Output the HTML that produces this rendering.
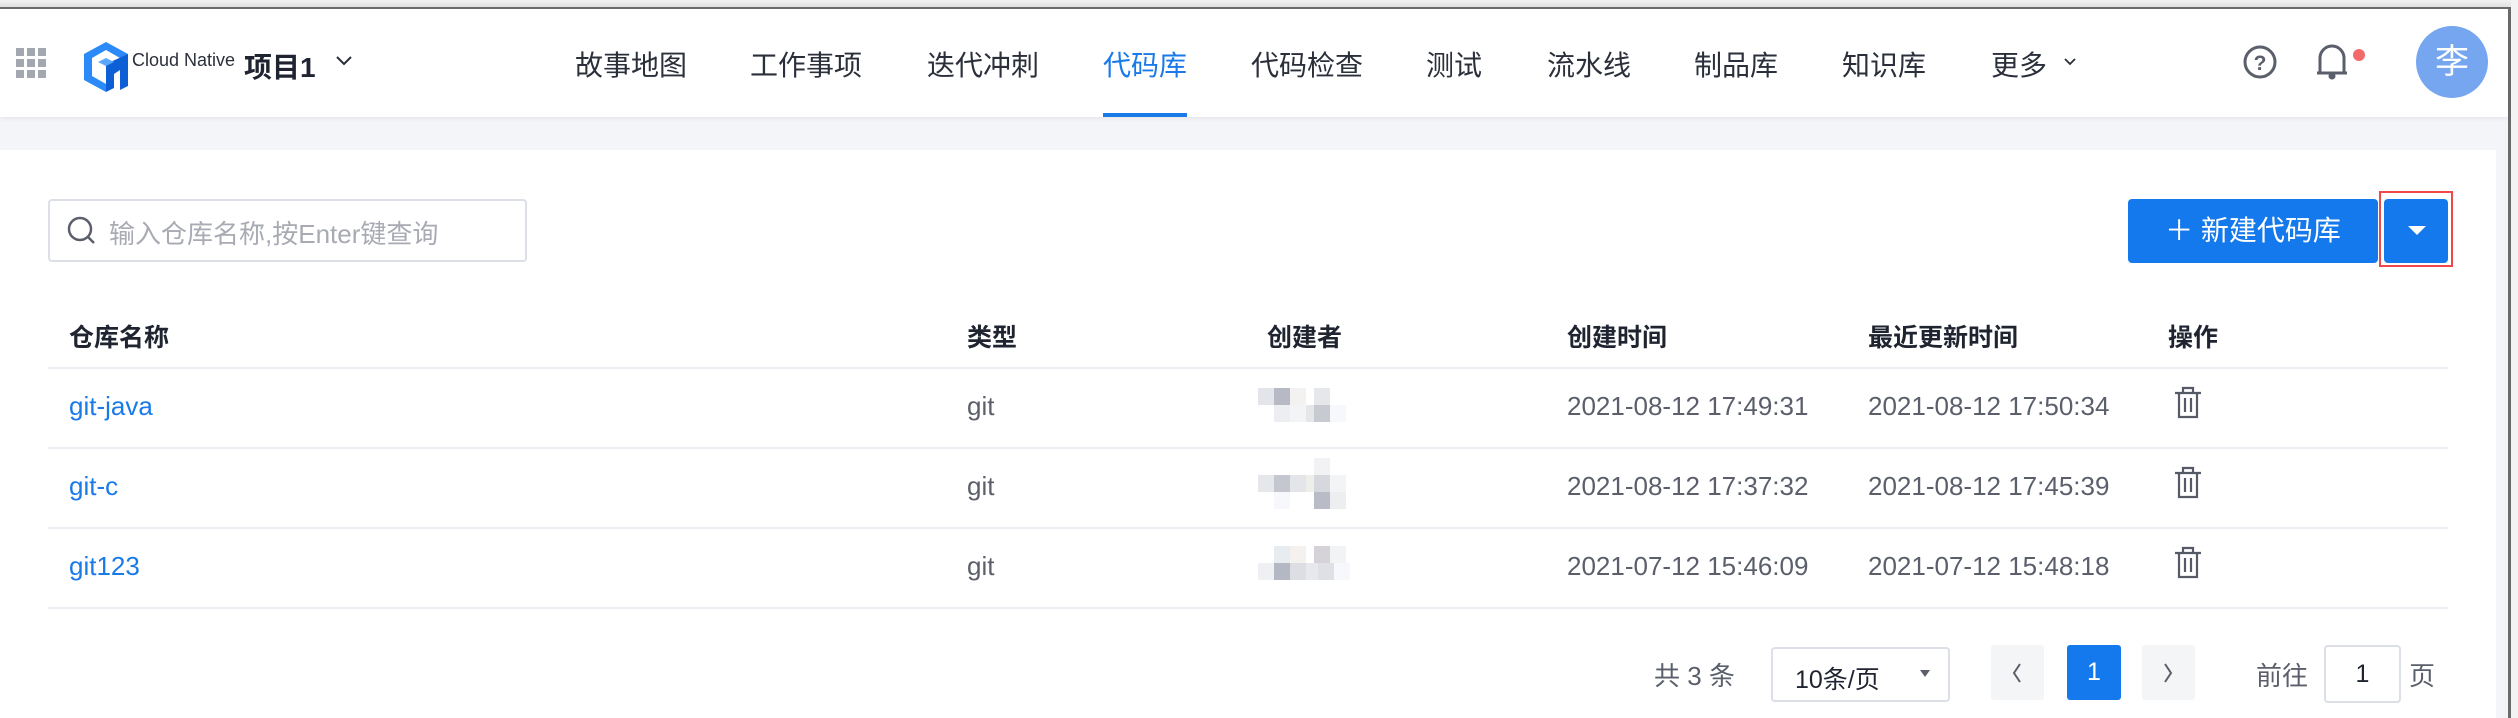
<!DOCTYPE html>
<html><head><meta charset="utf-8"><style>
*{margin:0;padding:0;box-sizing:border-box}
body{width:2518px;height:718px;position:relative;overflow:hidden;background:#f4f5f9;font-family:"Liberation Sans","Noto Sans CJK SC",sans-serif;color:#555a66}
.a{position:absolute;white-space:nowrap}
.hdr{position:absolute;left:0;top:9px;width:2508px;height:108px;background:#fff;box-shadow:0 2px 4px rgba(0,0,0,.06)}
.nav{top:44px;font-size:28px;color:#2a2f3a}
.card{position:absolute;left:0;top:150px;width:2496px;height:568px;background:#fff}
.th{top:318px;font-size:25px;font-weight:bold;color:#1f2430}
.line{position:absolute;left:48px;width:2400px;height:2px;background:#ebeef3}
.td{font-size:26px;color:#5a5f6b}
.lnk{color:#1a7ae8}
.blur{position:absolute;width:100px;height:40px}
.blur i{position:absolute;width:16px;height:17px;display:block}
</style></head><body>
<div class="a" style="left:0;top:0;width:2518px;height:8px;background:linear-gradient(#f2f2f2,#ddd)"></div>
<div class="a" style="left:0;top:7px;width:2511px;height:3px;background:#6b6b6b"></div>
<div class="a" style="left:2508px;top:7px;width:3px;height:711px;background:#6b6b6b"></div>
<div class="a" style="left:2511px;top:0;width:7px;height:718px;background:#f3f3f3"></div>
<div class="hdr"></div>
<svg class="a" style="left:16px;top:48px" width="32" height="32"><g fill="#a3a7b0"><rect x="0" y="0" width="8" height="8"/><rect x="11" y="0" width="8" height="8"/><rect x="22" y="0" width="8" height="8"/><rect x="0" y="11" width="8" height="8"/><rect x="11" y="11" width="8" height="8"/><rect x="22" y="11" width="8" height="8"/><rect x="0" y="22" width="8" height="8"/><rect x="11" y="22" width="8" height="8"/><rect x="22" y="22" width="8" height="8"/></g></svg>
<svg class="a" style="left:84px;top:42px" width="46" height="50" viewBox="0 0 46 50"><path d="M22 0 L44 12 L44 18 L36 23 L36 16 L22 8 L8 16 L8 34 L22 42 L22 50 L0 38 L0 12 Z" fill="#2b8af7"/><path d="M22 22 L44 12 L44 44 L36 48 L36 28 L30 32 L30 46 L22 50 Z" fill="#0d5fd6"/><path d="M14 20 L22 16 L30 20 L22 24 Z" fill="#5aa7ff"/></svg>
<div class="a" style="left:132px;top:50px;font-size:18px;color:#2a2f3a">Cloud Native</div>
<div class="a" style="left:244px;top:46px;font-size:28px;font-weight:bold;color:#1f2430">项目1</div>
<svg class="a" style="left:336px;top:56px" width="16" height="10"><path d="M1 1 L8 8 L15 1" stroke="#2a2f3a" stroke-width="2" fill="none"/></svg>
<div class="a nav" style="left:575px">故事地图</div>
<div class="a nav" style="left:750px">工作事项</div>
<div class="a nav" style="left:927px">迭代冲刺</div>
<div class="a nav" style="left:1103px;color:#1a7ae8">代码库</div>
<div class="a" style="left:1103px;top:113px;width:84px;height:4px;background:#1a7ae8"></div>
<div class="a nav" style="left:1251px">代码检查</div>
<div class="a nav" style="left:1426px">测试</div>
<div class="a nav" style="left:1547px">流水线</div>
<div class="a nav" style="left:1694px">制品库</div>
<div class="a nav" style="left:1842px">知识库</div>
<div class="a nav" style="left:1991px">更多</div>
<svg class="a" style="left:2064px;top:58px" width="12" height="8"><path d="M1 1 L6 6 L11 1" stroke="#2a2f3a" stroke-width="1.8" fill="none"/></svg>
<svg class="a" style="left:2243px;top:45px" width="34" height="34"><circle cx="17" cy="17" r="15" stroke="#5a5f6b" stroke-width="3" fill="none"/><text x="17" y="25" font-size="21" font-weight="bold" text-anchor="middle" fill="#5a5f6b" font-family="Liberation Sans">?</text></svg>
<svg class="a" style="left:2314px;top:40px" width="52" height="40"><path d="M3 33 L33 33 M6 33 L6 18 A12 12 0 0 1 30 18 L30 33" stroke="#5a5f6b" stroke-width="3" fill="none"/><circle cx="18" cy="36" r="3.5" fill="#5a5f6b"/><circle cx="45" cy="15" r="6" fill="#f26b6b"/></svg>
<div class="a" style="left:2416px;top:26px;width:72px;height:72px;border-radius:50%;background:#76a6ef;color:#fff;font-size:34px;text-align:center;line-height:72px">李</div>
<div class="card"></div>
<div class="a" style="left:48px;top:199px;width:479px;height:63px;border:2px solid #dcdfe6;border-radius:4px"></div>
<svg class="a" style="left:67px;top:216px" width="30" height="30"><circle cx="13" cy="13" r="11" stroke="#5a5f6b" stroke-width="2.5" fill="none"/><path d="M21 21 L27 27" stroke="#5a5f6b" stroke-width="2.5"/></svg>
<div class="a" style="left:109px;top:214px;font-size:26px;color:#a8abb3">输入仓库名称,按Enter键查询</div>
<div class="a" style="left:2128px;top:199px;width:250px;height:64px;background:#1379ec;border-radius:4px;color:#fff;font-size:28px;line-height:64px;text-align:center">＋ 新建代码库</div>
<div class="a" style="left:2379px;top:191px;width:74px;height:76px;border:2px solid #f04848"></div>
<div class="a" style="left:2384px;top:199px;width:64px;height:64px;background:#1379ec;border-radius:4px"></div>
<svg class="a" style="left:2408px;top:226px" width="18" height="10"><path d="M0 0 L18 0 L9 9 Z" fill="#fff"/></svg>
<div class="a th" style="left:69px">仓库名称</div>
<div class="a th" style="left:967px">类型</div>
<div class="a th" style="left:1267px">创建者</div>
<div class="a th" style="left:1567px">创建时间</div>
<div class="a th" style="left:1868px">最近更新时间</div>
<div class="a th" style="left:2168px">操作</div>
<div class="line" style="top:367px"></div>
<div class="line" style="top:447px"></div>
<div class="line" style="top:527px"></div>
<div class="line" style="top:607px"></div>
<div class="a td lnk" style="left:69px;top:391px">git-java</div>
<div class="a td" style="left:967px;top:391px">git</div>
<div class="blur" style="left:1258px;top:388px"><i style="left:0;top:0;background:#e4e5ea"></i><i style="left:16px;top:0;background:#b7bac4"></i><i style="left:32px;top:0;background:#f4f2f0"></i><i style="left:56px;top:0;background:#e6e7ea"></i><i style="left:16px;top:17px;background:#eceef2"></i><i style="left:32px;top:17px;background:#f3f4f6"></i><i style="left:48px;top:17px;background:#e6e6e9"></i><i style="left:56px;top:17px;background:#c8cad2"></i><i style="left:72px;top:17px;background:#f6f8fc"></i></div>
<div class="a td" style="left:1567px;top:391px">2021-08-12 17:49:31</div>
<div class="a td" style="left:1868px;top:391px">2021-08-12 17:50:34</div>
<div class="a td lnk" style="left:69px;top:471px">git-c</div>
<div class="a td" style="left:967px;top:471px">git</div>
<div class="blur" style="left:1258px;top:458px;height:54px"><i style="left:56px;top:0;background:#f2f2f4"></i><i style="left:0;top:17px;background:#e6e7eb"></i><i style="left:16px;top:17px;background:#c4c7cf"></i><i style="left:32px;top:17px;background:#e3e5e8"></i><i style="left:48px;top:17px;background:#eeeeea"></i><i style="left:56px;top:17px;background:#d7d8dd"></i><i style="left:72px;top:17px;background:#f3f4f6"></i><i style="left:16px;top:34px;background:#f6f8fb"></i><i style="left:56px;top:34px;background:#b9bcc6"></i><i style="left:72px;top:34px;background:#eceef0"></i></div>
<div class="a td" style="left:1567px;top:471px">2021-08-12 17:37:32</div>
<div class="a td" style="left:1868px;top:471px">2021-08-12 17:45:39</div>
<div class="a td lnk" style="left:69px;top:551px">git123</div>
<div class="a td" style="left:967px;top:551px">git</div>
<div class="blur" style="left:1258px;top:546px"><i style="left:16px;top:0;background:#e6ecf0"></i><i style="left:32px;top:0;background:#f4f1ee"></i><i style="left:56px;top:0;background:#d5d3d8"></i><i style="left:72px;top:0;background:#f2f3f5"></i><i style="left:0;top:17px;background:#eef0f3"></i><i style="left:16px;top:17px;background:#b4b8c2"></i><i style="left:32px;top:17px;background:#dcdee4"></i><i style="left:48px;top:17px;background:#e7e8ec"></i><i style="left:60px;top:17px;background:#dfe0e5"></i><i style="left:76px;top:17px;background:#f6f8fb"></i></div>
<div class="a td" style="left:1567px;top:551px">2021-07-12 15:46:09</div>
<div class="a td" style="left:1868px;top:551px">2021-07-12 15:48:18</div>
<svg class="a" style="left:2174px;top:386px" width="28" height="34"><path d="M1 7 L27 7 M9 7 L9 2 L19 2 L19 7 M5 7 L5 31 L23 31 L23 7 M11 12 L11 26 M17 12 L17 26" stroke="#555a66" stroke-width="2.2" fill="none"/></svg>
<svg class="a" style="left:2174px;top:466px" width="28" height="34"><path d="M1 7 L27 7 M9 7 L9 2 L19 2 L19 7 M5 7 L5 31 L23 31 L23 7 M11 12 L11 26 M17 12 L17 26" stroke="#555a66" stroke-width="2.2" fill="none"/></svg>
<svg class="a" style="left:2174px;top:546px" width="28" height="34"><path d="M1 7 L27 7 M9 7 L9 2 L19 2 L19 7 M5 7 L5 31 L23 31 L23 7 M11 12 L11 26 M17 12 L17 26" stroke="#555a66" stroke-width="2.2" fill="none"/></svg>
<div class="a td" style="left:1654px;top:656px">共 3 条</div>
<div class="a" style="left:1771px;top:647px;width:179px;height:55px;border:2px solid #dcdfe6;border-radius:4px"></div>
<div class="a" style="left:1795px;top:660px;font-size:25px;color:#1f2430">10条/页</div>
<svg class="a" style="left:1920px;top:670px" width="10" height="8"><path d="M0 0 L10 0 L5 7 Z" fill="#5a5f6b"/></svg>
<div class="a" style="left:1991px;top:645px;width:53px;height:55px;background:#f4f5f7;border-radius:3px"></div>
<svg class="a" style="left:2011px;top:662px" width="12" height="22"><path d="M9 2 L3 11 L9 20" stroke="#5a5f6b" stroke-width="2" fill="none"/></svg>
<div class="a" style="left:2067px;top:645px;width:54px;height:55px;background:#1379ec;border-radius:3px;color:#fff;font-size:25px;text-align:center;line-height:55px">1</div>
<div class="a" style="left:2142px;top:645px;width:53px;height:55px;background:#f4f5f7;border-radius:3px"></div>
<svg class="a" style="left:2162px;top:662px" width="12" height="22"><path d="M3 2 L9 11 L3 20" stroke="#5a5f6b" stroke-width="2" fill="none"/></svg>
<div class="a td" style="left:2256px;top:656px">前往</div>
<div class="a" style="left:2324px;top:645px;width:77px;height:58px;border:2px solid #dcdfe6;border-radius:4px;text-align:center;line-height:54px;font-size:25px;color:#1f2430">1</div>
<div class="a td" style="left:2409px;top:656px">页</div>
</body></html>
